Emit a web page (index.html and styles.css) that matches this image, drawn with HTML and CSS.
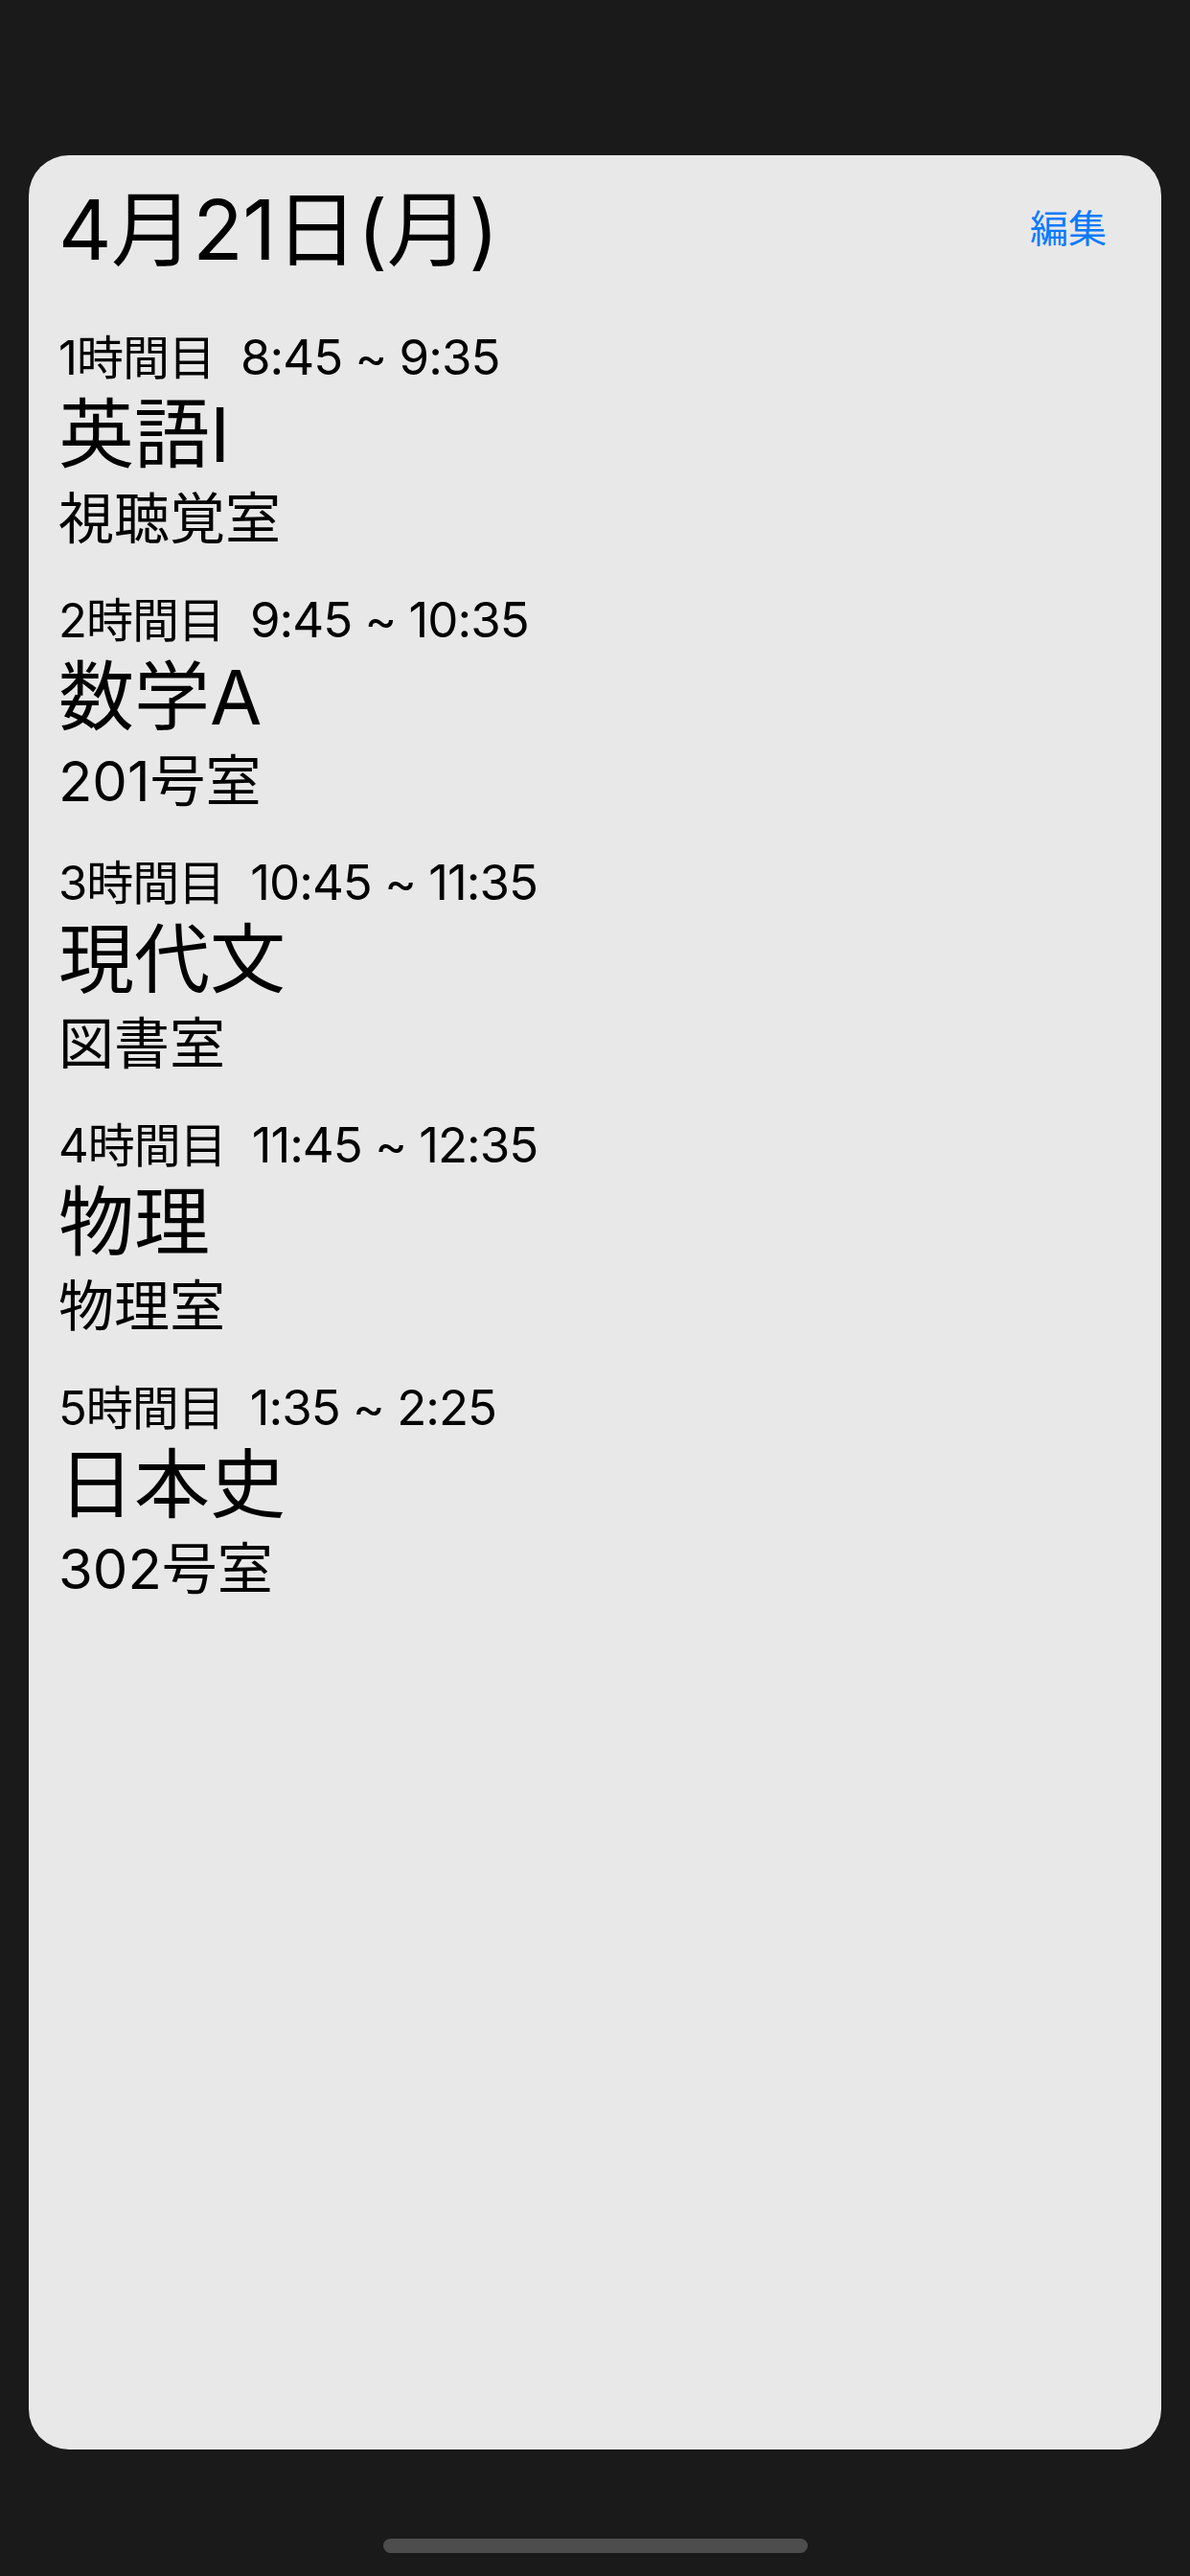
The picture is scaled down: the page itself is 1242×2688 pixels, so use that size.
FILE: index.html
```html
<!DOCTYPE html>
<html lang="ja">
<head>
<meta charset="utf-8">
<title>時間割</title>
<link rel="stylesheet" href="styles.css">
</head>
<body>
<div class="screen">
  <main class="card">
    <header class="card-header">
      <h1 class="date">4月21日(月)</h1>
      <a class="edit" href="#">編集</a>
    </header>
    <ul class="periods">
      <li class="period">
        <div class="period-time"><span class="num">1時間目</span><span class="time">8:45 ~ 9:35</span></div>
        <div class="subject">英語I</div>
        <div class="room">視聴覚室</div>
      </li>
      <li class="period">
        <div class="period-time"><span class="num">2時間目</span><span class="time">9:45 ~ 10:35</span></div>
        <div class="subject">数学A</div>
        <div class="room">201号室</div>
      </li>
      <li class="period">
        <div class="period-time"><span class="num">3時間目</span><span class="time">10:45 ~ 11:35</span></div>
        <div class="subject">現代文</div>
        <div class="room">図書室</div>
      </li>
      <li class="period">
        <div class="period-time"><span class="num">4時間目</span><span class="time">11:45 ~ 12:35</span></div>
        <div class="subject">物理</div>
        <div class="room">物理室</div>
      </li>
      <li class="period">
        <div class="period-time"><span class="num">5時間目</span><span class="time">1:35 ~ 2:25</span></div>
        <div class="subject">日本史</div>
        <div class="room">302号室</div>
      </li>
    </ul>
  </main>
  <div class="home-indicator"></div>
</div>
</body>
</html>
```

FILE: styles.css
```css
* {
  box-sizing: border-box;
}

html, body {
  margin: 0;
  padding: 0;
  background: #1a1a1a;
}

body {
  font-family: Inter, "Noto Sans CJK JP", sans-serif;
  color: #000;
}

.screen {
  width: 1242px;
  height: 2688px;
  padding-top: 162px;
  display: flex;
  flex-direction: column;
  align-items: center;
}

.card {
  width: 1182px;
  height: 2394px;
  background: #e8e8e8;
  border-radius: 42px;
  padding: 22px 57px 0 31px;
}

.card-header {
  display: flex;
  justify-content: space-between;
  align-items: center;
  height: 110px;
}

.date {
  margin: 0;
  font-size: 86px;
  line-height: 110px;
  font-weight: 400;
  letter-spacing: -0.6px;
  padding-top: 2px;
}

.edit {
  font-size: 40px;
  line-height: 56px;
  color: #0a7aff;
  text-decoration: none;
}

.periods {
  list-style: none;
  margin: 49px 0 0;
  padding: 0;
  display: flex;
  flex-direction: column;
  gap: 34px;
}

.period {
  display: flex;
  flex-direction: column;
}

.period-time {
  display: flex;
  align-items: baseline;
  font-size: 51px;
  line-height: 60px;
  height: 60px;
  letter-spacing: -1px;
}

.period-time .num {
  font-size: 49px;
}

.period-time .time {
  margin-left: 27px;
}

.subject {
  font-size: 79px;
  line-height: 96px;
  height: 96px;
  padding-top: 2px;
}

.room {
  font-size: 58px;
  line-height: 84px;
  height: 84px;
}

.home-indicator {
  margin-top: 93px;
  width: 443px;
  height: 15px;
  border-radius: 8px;
  background: #4d4d4d;
}
```
